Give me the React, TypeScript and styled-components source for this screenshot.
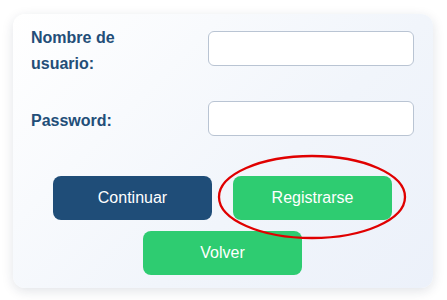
import * as React from 'react';
import styled, { createGlobalStyle } from 'styled-components';

const GlobalStyle = createGlobalStyle`
  html, body {
    margin: 0;
    padding: 0;
    background: #ffffff;
    font-family: "Liberation Sans", Arial, sans-serif;
  }
`;

const Page = styled.div`
  position: relative;
  width: 447px;
  height: 300px;
  padding: 14px 14px 0 13px;
  box-sizing: border-box;
`;

const Card = styled.form`
  width: 420px;
  box-sizing: border-box;
  padding: 6px 19px 13px 18px;
  border-radius: 12px;
  background: linear-gradient(135deg, #ffffff 0%, #f1f5fb 60%, #ecf1fa 100%);
  box-shadow: 0 3px 12px rgba(20, 40, 70, 0.13);
`;

const Fields = styled.div`
  display: grid;
  grid-template-columns: 1fr 206px;
  row-gap: 24px;
  align-items: center;
`;

const Label = styled.label`
  padding-top: 5px;
  font-size: 16px;
  font-weight: bold;
  line-height: 26px;
  color: #234e78;
  max-width: 100px;
`;

const Input = styled.input`
  box-sizing: border-box;
  width: 206px;
  height: 35px;
  border: 1px solid #b9c4d3;
  border-radius: 6px;
  background: #ffffff;
  font-family: inherit;
  font-size: 15px;
  padding: 0 10px;
  outline: none;
`;

const Actions = styled.div`
  display: flex;
  flex-wrap: wrap;
  justify-content: center;
  gap: 11px 21px;
  margin-top: 40px;
`;

const Button = styled.button<{ $variant: 'primary' | 'success' }>`
  width: 159px;
  height: 44px;
  border: none;
  border-radius: 8px;
  background: ${(p) => (p.$variant === 'primary' ? '#1f4d78' : '#2ecc71')};
  color: #ffffff;
  font-family: inherit;
  font-size: 16px;
  cursor: pointer;
`;

const Marker = styled.svg`
  position: absolute;
  left: 218px;
  top: 155px;
  overflow: visible;
  pointer-events: none;
`;

export default function App() {
  return (
    <>
      <GlobalStyle />
      <Page>
        <Card onSubmit={(e) => e.preventDefault()}>
          <Fields>
            <Label htmlFor="user">Nombre de usuario:</Label>
            <Input id="user" type="text" />
            <Label htmlFor="pass">Password:</Label>
            <Input id="pass" type="password" />
          </Fields>
          <Actions>
            <Button $variant="primary">Continuar</Button>
            <Button $variant="success">Registrarse</Button>
            <Button $variant="success">Volver</Button>
          </Actions>
        </Card>
        <Marker width="190" height="86" viewBox="0 0 190 86">
          <ellipse cx="94" cy="42" rx="93" ry="41" fill="none" stroke="#e00000" strokeWidth="2.3" />
        </Marker>
      </Page>
    </>
  );
}
